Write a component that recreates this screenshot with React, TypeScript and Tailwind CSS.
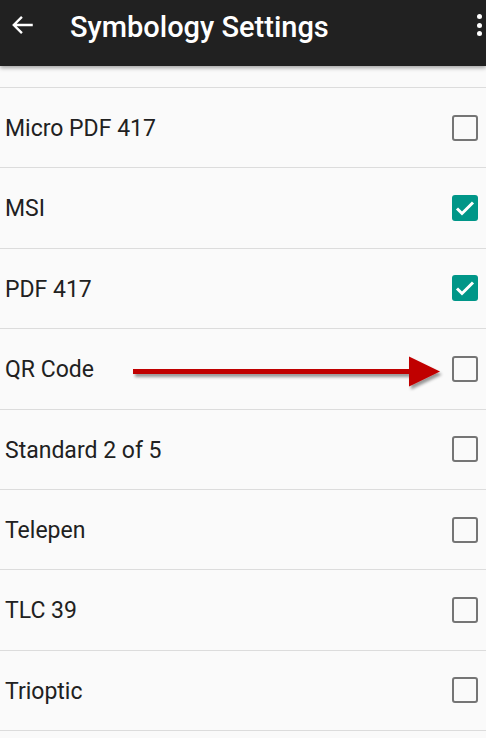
import React from 'react';

interface Symbology {
  name: string;
  checked: boolean;
}

const ITEMS: Symbology[] = [
  { name: 'Micro PDF 417', checked: false },
  { name: 'MSI', checked: true },
  { name: 'PDF 417', checked: true },
  { name: 'QR Code', checked: false },
  { name: 'Standard 2 of 5', checked: false },
  { name: 'Telepen', checked: false },
  { name: 'TLC 39', checked: false },
  { name: 'Trioptic', checked: false },
];

function Checkbox({ checked }: { checked: boolean }) {
  if (checked) {
    return (
      <div className="w-[26px] h-[26px] rounded-[3px] bg-[#009688] flex items-center justify-center">
        <svg width="24" height="24" viewBox="0 0 24 24">
          <path d="M4 12.5l5 5L20 6.5" fill="none" stroke="#ffffff" strokeWidth="3" />
        </svg>
      </div>
    );
  }
  return <div className="w-[26px] h-[26px] rounded-[3px] border-[2.5px] border-[#757575]" />;
}

export default function App() {
  return (
    <div
      className="relative w-[486px] h-[738px] overflow-hidden bg-[#fafafa]"
      style={{ fontFamily: 'Roboto, "Noto Sans", sans-serif' }}
    >
      {/* Toolbar */}
      <div className="relative z-10 h-[66px] bg-[#212121] flex items-start shadow-[0_2px_4px_rgba(0,0,0,0.35)]">
        <div className="w-[70px] pl-[10px] pt-[12px] flex items-center">
          <svg width="26" height="26" viewBox="0 0 24 24">
            <path d="M21 12H3.5M11 4.5L3.5 12l7.5 7.5" fill="none" stroke="#ffffff" strokeWidth="2.2" />
          </svg>
        </div>
        <h1 className="text-white text-[29px] font-medium leading-[34px] pt-[10px]">Symbology Settings</h1>
        <div className="ml-auto mr-[4px] pt-[14px] flex flex-col gap-[3.5px]">
          <span className="block w-[5px] h-[5px] rounded-full bg-white" />
          <span className="block w-[5px] h-[5px] rounded-full bg-white" />
          <span className="block w-[5px] h-[5px] rounded-full bg-white" />
        </div>
      </div>

      {/* List */}
      <div className="h-[22px] border-b border-[#dcdcdc]" />
      {ITEMS.map((item) => (
        <div
          key={item.name}
          className="h-[80.4px] border-b border-[#dcdcdc] flex items-center justify-between pl-[5px] pr-[8px]"
        >
          <span className="text-[23px] text-[#212121] pt-[3px]">{item.name}</span>
          <Checkbox checked={item.checked} />
        </div>
      ))}

      {/* Annotation arrow */}
      <svg className="absolute left-[130px] top-[354px]" width="320" height="40" viewBox="0 0 320 40">
        <defs>
          <filter id="sh" x="-10%" y="-50%" width="120%" height="200%">
            <feDropShadow dx="2" dy="3" stdDeviation="1.5" floodColor="#000" floodOpacity="0.4" />
          </filter>
        </defs>
        <g filter="url(#sh)">
          <rect x="3" y="15" width="280" height="5" fill="#c00000" />
          <path d="M279 2.5 L310 17.5 L279 32.5 Z" fill="#c00000" />
        </g>
      </svg>
    </div>
  );
}
